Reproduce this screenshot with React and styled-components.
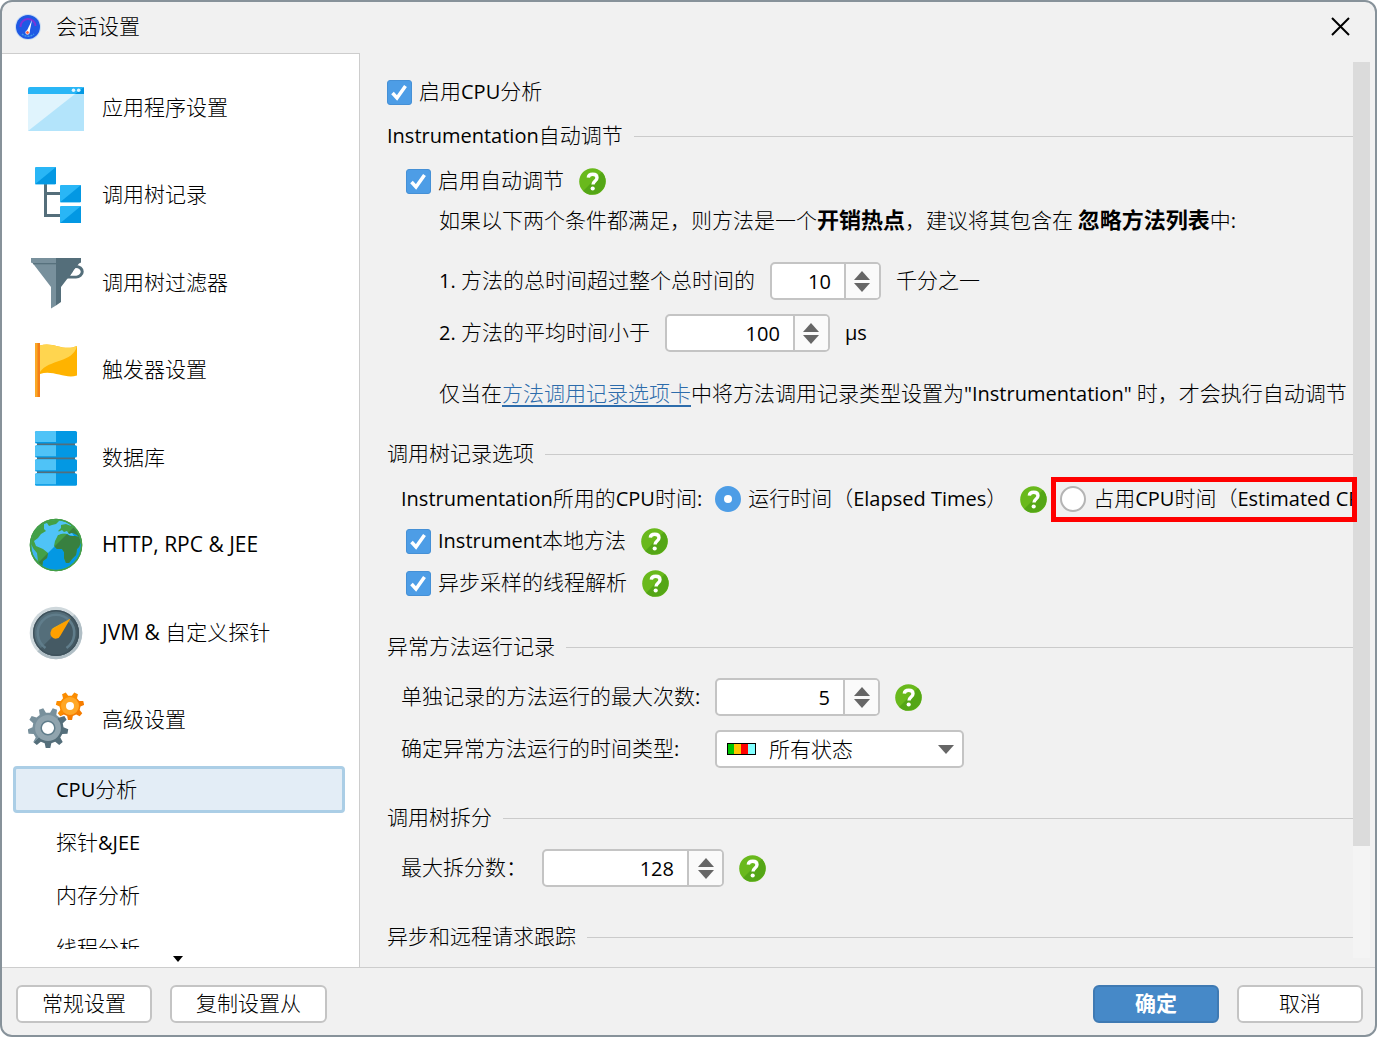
// src/App.jsx

import React, { useState } from 'react';
import styled, { createGlobalStyle } from 'styled-components';

const CJK = '"Noto Sans CJK SC", sans-serif';
const LATIN = '"Open Sans", "Noto Sans CJK SC", sans-serif';

const GlobalStyle = createGlobalStyle`
  * {
    box-sizing: border-box;
  }

  body {
    margin: 0;
    background: #fff;
    color: #000;
    font-family: ${CJK};
    font-size: 21px;
    font-weight: 300;
    line-height: 25px;
  }

  button,
  input,
  select {
    margin: 0;
    color: inherit;
    font: inherit;
  }
`;

// Text: Latin runs are set in their own face and size
const TextLine = styled.span`
  display: block;
  height: 28px;
  white-space: nowrap;
`;

const Latin = styled.span`
  font-family: ${LATIN};
  font-size: 20px;
  font-weight: 400;
  line-height: 20px;
`;

const splitRuns = (text) =>
  text
    .split(/([\x20-\x7eμ]+)/)
    .map((part, i) => (i % 2 ? <Latin key={i}>{part}</Latin> : part));

const Mixed = ({ children }) => <TextLine>{splitRuns(children)}</TextLine>;

// Window frame
const Dialog = styled.div`
  display: flex;
  flex-direction: column;
  height: 100vh;
  overflow: hidden;
  background: #f1f1f1;
  border: 2px solid #87929a;
  border-radius: 12px;
`;

const TitleBar = styled.header`
  display: flex;
  align-items: center;
  gap: 15px;
  height: 51px;
  padding: 0 24px 2px 13px;
`;

const Title = styled.h1`
  flex: 1;
  margin: 0;
  font-size: 21px;
  font-weight: 300;
`;

const CloseButton = styled.button`
  display: flex;
  padding: 0;
  background: none;
  border: none;
  cursor: pointer;
`;

const Body = styled.div`
  display: flex;
  flex: 1;
  min-height: 0;
`;

// Sidebar
const Sidebar = styled.nav`
  display: flex;
  flex-direction: column;
  flex: none;
  width: 358px;
  padding-top: 10px;
  background: #fff;
  border-top: 1px solid #cdcdcd;
  border-right: 1px solid #cdcdcd;
`;

const NavList = styled.div`
  display: flex;
  flex-direction: column;
  flex: 1;

  ${Latin} {
    font-size: 21px;
  }
`;

const NavItem = styled.button`
  display: flex;
  align-items: center;
  flex: 1;
  gap: 18px;
  padding: 0 26px;
  background: none;
  border: none;
  text-align: left;
  cursor: pointer;
`;

const SubList = styled.div`
  display: flex;
  flex-direction: column;
  gap: 6px;
  height: 185px;
  padding: 2px 14px 0 11px;
  overflow: hidden;
`;

const SubItem = styled.button`
  flex: none;
  height: 47px;
  padding: 0 40px;
  background: ${(props) => (props.$active ? '#e3edf6' : 'none')};
  border: 3px solid ${(props) => (props.$active ? '#abcee6' : 'transparent')};
  border-radius: 4px;
  text-align: left;
  cursor: pointer;
`;

const MoreButton = styled.button`
  display: flex;
  align-items: center;
  justify-content: center;
  height: 18px;
  padding: 2px 6px 0 0;
  background: none;
  border: none;
`;

// Settings panel
const Panel = styled.main`
  display: flex;
  flex: 1;
  min-width: 0;
  padding: 9px 5px 9px 27px;
`;

const Settings = styled.div`
  flex: 1;
  min-width: 0;
  padding-top: 16px;
  white-space: nowrap;
`;

const ScrollTrack = styled.div`
  display: flex;
  flex-direction: column;
  flex: none;
  width: 17px;
  background: #f4f4f4;
`;

const ScrollThumb = styled.div`
  flex: 7;
  background: #dbdbdb;
`;

const ScrollRest = styled.div`
  flex: 1;
`;

const SectionTitle = styled.h2`
  display: flex;
  align-items: center;
  gap: 11px;
  margin: ${(props) => props.$top || 36}px 0 17px;
  font-size: 21px;
  font-weight: 300;

  &::after {
    content: '';
    flex: 1;
    height: 1px;
    background: #cbcbcb;
  }
`;

const Row = styled.div`
  display: flex;
  align-items: center;
  gap: ${(props) => props.$gap || 15}px;
  margin-top: ${(props) => props.$top || 0}px;
  padding-left: ${(props) => props.$indent || 0}px;
`;

const Paragraph = styled.p`
  height: 28px;
  margin: ${(props) => props.$top}px 0 0;
  padding-left: 52px;
`;

const Strong = styled.b`
  font-size: 22px;
  font-weight: 700;
`;

const Link = styled.a`
  color: #2d6cab;
  text-decoration: underline;
  text-decoration-thickness: 2px;
  text-underline-offset: 4px;
`;

const FieldLabel = styled.label`
  width: ${(props) => (props.$width ? `${props.$width}px` : 'auto')};
`;

// Check boxes and radio buttons
const OptionLabel = styled.label`
  display: flex;
  align-items: center;
  gap: 7px;
`;

const CheckWrap = styled.span`
  position: relative;
  display: flex;
  flex: none;

  svg {
    position: absolute;
    inset: 0;
    pointer-events: none;
  }
`;

const CheckInput = styled.input`
  appearance: none;
  width: 25px;
  height: 25px;
  background: #fff;
  border: 1px solid #b4b4b4;
  border-radius: 3px;

  &:checked {
    background: #4d9de6;
    border-color: #4590d6;
  }
`;

const RadioInput = styled.input`
  appearance: none;
  flex: none;
  width: 26px;
  height: 26px;
  background: #fff;
  border: 2px solid #b4b4b4;
  border-radius: 50%;

  &:checked {
    border: 9px solid #4d9de6;
  }
`;

const HelpButton = styled.button`
  display: flex;
  flex: none;
  padding: 0;
  background: none;
  border: none;
  cursor: pointer;
`;

const Highlighted = styled.div`
  position: relative;
  display: flex;
  flex: 1;
  min-width: 0;

  ${OptionLabel} {
    min-width: 0;
    overflow-x: clip;
  }
`;

const Frame = styled.div`
  position: absolute;
  inset: -8px -4px -9px -9px;
  border: 5px solid #ff0000;
  pointer-events: none;
`;

// Number field with up and down arrows
const SpinnerBox = styled.div`
  display: flex;
  width: ${(props) => props.$width}px;
  height: 38px;
  overflow: hidden;
  background: #fff;
  border: 2px solid #c4c4c4;
  border-radius: 5px;
`;

const SpinnerInput = styled.input`
  flex: 1;
  min-width: 0;
  padding: 0 13px;
  background: none;
  border: none;
  outline: none;
  font-family: ${LATIN};
  font-size: 20px;
  font-weight: 400;
  text-align: right;
`;

const SpinnerButtons = styled.div`
  display: flex;
  flex-direction: column;
  justify-content: center;
  gap: 3px;
  width: 35px;
  background: #fafafa;
  border-left: 2px solid #c4c4c4;
`;

const StepButton = styled.button`
  display: flex;
  justify-content: center;
  padding: 0;
  background: none;
  border: none;
`;

// Drop-down
const SelectBox = styled.div`
  position: relative;
  width: 249px;
`;

const Select = styled.select`
  display: block;
  appearance: none;
  width: 100%;
  height: 38px;
  padding: 0 40px 2px 52px;
  background: #fff;
  border: 2px solid #c4c4c4;
  border-radius: 5px;
`;

const StateSwatch = styled.svg`
  position: absolute;
  top: 13px;
  left: 12px;
  pointer-events: none;
`;

const SelectArrow = styled.svg`
  position: absolute;
  top: 15px;
  right: 10px;
  pointer-events: none;
`;

// Bottom bar
const Footer = styled.footer`
  display: flex;
  align-items: center;
  gap: 18px;
  height: 68px;
  padding: 4px 12px 0 14px;
  border-top: 1px solid #cdcdcd;
`;

const Spacer = styled.div`
  flex: 1;
`;

const Button = styled.button`
  height: 38px;
  padding: 0 ${(props) => (props.$wide ? 40 : 24)}px;
  background: ${(props) => (props.$primary ? '#4689c8' : '#fff')};
  border: 2px solid ${(props) => (props.$primary ? '#3f7ab3' : '#c4c4c4')};
  border-radius: 6px;
  color: ${(props) => (props.$primary ? '#fff' : '#000')};
  font-weight: ${(props) => (props.$primary ? 700 : 300)};
  cursor: pointer;
`;

const AppLogo = () => (
  <svg width="26" height="26" viewBox="0 0 26 26">
    <circle cx="13" cy="13" r="13" fill="#c9dcf3" />
    <circle cx="13" cy="13" r="12" fill="#1f59e4" />
    <path d="M5.500 13a7.500 7.500 0 0 1 15-1" fill="none" stroke="#7a35d8" strokeWidth="2" />
    <path d="M7 20a9 9 0 0 0 12 0" fill="none" stroke="#3f9bea" strokeWidth="1.500" strokeDasharray="2 1" />
    <path d="M17 6l-6 12.500h3.500z" fill="#fff" />
    <circle cx="12.500" cy="18.500" r="1.800" fill="#ff5a36" stroke="#fff" strokeWidth="0.800" />
  </svg>
);

const WindowIcon = () => (
  <svg width="56" height="56" viewBox="0 0 56 56">
    <path d="M0 51V9q0-2 2-2h52q2 0 2 2v42z" fill="#e0f4fd" />
    <path d="M0 51L47 14h9v37z" fill="#b3e4fb" />
    <path d="M0 14V9q0-2 2-2h52q2 0 2 2v5z" fill="#29b6f6" />
    <path d="M47 14l9-7v7z" fill="#0398e3" />
    <circle cx="45.500" cy="10.300" r="1.800" fill="#e1f5fe" />
    <circle cx="50.700" cy="10.300" r="1.800" fill="#e1f5fe" />
  </svg>
);

const TreeIcon = () => (
  <svg width="56" height="56" viewBox="0 0 56 56">
    <path d="M17.500 17v31.500H33M17.500 26.500H33" fill="none" stroke="#546e7a" strokeWidth="3" />
    {[[7, 0], [32, 18], [32, 39]].map(([x, y]) => (
      <g key={y}>
        <rect x={x} y={y} width="21" height="17.300" rx="1" fill="#29b6f6" />
        <path d={`M${x + 21} ${y}v16.3q0 1-1 1H${x}z`} fill="#0398e3" />
      </g>
    ))}
  </svg>
);

const FunnelIcon = () => (
  <svg width="56" height="56" viewBox="0 0 56 56">
    <path d="M47 11.500h1a6 5 0 0 1 0 10.400H39l5-6" fill="none" stroke="#546e7a" strokeWidth="3" />
    <path d="M3 3h25v47.500l-5 3V32L5 8.500 3 7.500z" fill="#78909c" />
    <path d="M28 3h25v4.500l-2 1L33 32v15l-5 3.500z" fill="#546e7a" />
    <path d="M5 8.700h23" stroke="#546e7a" strokeWidth="1.200" />
    <path d="M42.500 20.400l4.500-6.500h1.500a3.300 3.300 0 0 1 0 6.500z" fill="#fff" />
  </svg>
);

const FlagIcon = () => (
  <svg width="56" height="56" viewBox="0 0 56 56">
    <path d="M12 3.500C25-1 35 10 49 4v29.500c-12 4-24-6-37-1.500z" fill="#ffb300" />
    <path d="M12 3.500C25-1 35 10 49 4c-4 17-28 13-37 26z" fill="#ffd54f" />
    <path d="M7 1h3v54H7z" fill="#f9a825" />
    <path d="M9.500 1H12v54H9.500z" fill="#f57f17" />
  </svg>
);

const DatabaseIcon = () => (
  <svg width="56" height="56" viewBox="0 0 56 56">
    <path d="M9 4h38v48H9z" fill="#546e7a" />
    {[1, 15.2, 29.2, 43.3].map((y) => (
      <g key={y}>
        <rect x="7" y={y} width="42" height="12.400" rx="1.500" fill="#0398e3" />
        <path d={`M7 ${y + 1.5}q0-1.5 1.5-1.5H28v11H7z`} fill="#4fc3f7" />
      </g>
    ))}
  </svg>
);

const GlobeIcon = () => (
  <svg width="56" height="56" viewBox="0 0 56 56">
    <defs>
      <clipPath id="globe">
        <circle cx="28" cy="28" r="25" />
      </clipPath>
      <clipPath id="globeShade">
        <path d="M56 0L0 56h56z" />
      </clipPath>
    </defs>
    <circle cx="28" cy="28" r="26.300" fill="#3d8f45" />
    <g clipPath="url(#globe)">
      <path d="M0 0h56v56H0z" fill="#4fc3f7" />
      <path d="M56 0L0 56h56z" fill="#0398e3" />
      {[
        { fill: '#43a047', clip: undefined },
        { fill: '#388040', clip: 'url(#globeShade)' },
      ].map(({ fill, clip }) => (
        <g key={fill} fill={fill} clipPath={clip}>
          <path d="M0 0h31v4l-3 3-4 1-3 1-2-3-3 1 0 5 2 2-5 3-3 4-4 3 2 5 7 3 5 4-1 5-4 3-1 6-8-8-4-10-2-12z" />
          <path d="M30 14l3-3 0-3 5-1 5 2 3-2 9 13v4l-6-6-4-2-4 1-4-2-4 1z" />
          <path d="M27 24l3-6 4-2 5 1 3 2 5 0 4 1 2 5-2 5-2 2-1 6-4 4-3 4-3 0-2-5 0-6-2-3-5 0-3-3z" />
        </g>
      ))}
      <path d="M30 15l4-2 2 2 3-1 2 3 3-1 2 3-5-1-3-2-5 1-3 1z" fill="#4fc3f7" />
      <path d="M3 27q0 12 7 17l-1-8q-4-4-6-9z" fill="#43b4ee" />
    </g>
    <circle cx="28" cy="28" r="25.500" fill="none" stroke="#43a047" strokeWidth="1.500" />
  </svg>
);

const GaugeIcon = () => (
  <svg width="56" height="56" viewBox="0 0 56 56">
    <circle cx="28" cy="28" r="26.300" fill="#cfd8dc" />
    <path d="M46.600 9.400a26.300 26.300 0 0 1-37.200 37.200z" fill="#b0bec5" />
    <circle cx="28" cy="28" r="23" fill="#546e7a" />
    <path d="M44.300 11.700a23 23 0 0 1-32.600 32.600z" fill="#455a64" />
    <circle cx="28" cy="28" r="22.300" fill="none" stroke="#3f525c" strokeWidth="1.500" />
    <path d="M17.500 43A18.300 18.300 0 1 1 38.500 43" fill="none" stroke="#607d8b" strokeWidth="2.600" />
    <path d="M42.500 13.500L32.500 30.500a5.300 5.300 0 1 1-7-7z" fill="#ffa000" />
    <path d="M42.500 13.500L23 25.500a5.500 5.500 0 0 1 3-3z" fill="#ffb300" />
  </svg>
);

// Outline of a toothed wheel around cx, cy
const gearPath = (cx, cy, outer, inner, teeth) => {
  const points = [];
  for (let i = 0; i < teeth; i += 1) {
    const angle = (i / teeth) * Math.PI * 2 + Math.PI / 2;
    const step = Math.PI / teeth;
    [[-0.62, inner], [-0.32, outer], [0.32, outer], [0.62, inner]].forEach(([offset, radius]) => {
      const a = angle + offset * step;
      points.push(`${(cx + radius * Math.cos(a)).toFixed(2)} ${(cy + radius * Math.sin(a)).toFixed(2)}`);
    });
  }
  return `M${points.join('L')}z`;
};

const GearsIcon = () => (
  <svg width="56" height="56" viewBox="0 0 56 56">
    <defs>
      <linearGradient id="steel" x1="0" y1="0" x2="1" y2="1">
        <stop offset="0.5" stopColor="#78909c" />
        <stop offset="0.5" stopColor="#546e7a" />
      </linearGradient>
      <linearGradient id="amber" x1="0" y1="0" x2="1" y2="1">
        <stop offset="0.5" stopColor="#fb8c00" />
        <stop offset="0.5" stopColor="#f57c00" />
      </linearGradient>
    </defs>
    <path d={gearPath(42, 14, 14.2, 10.5, 7)} fill="url(#amber)" />
    <circle cx="42" cy="14" r="6.500" fill="#fff" stroke="#ffa726" strokeWidth="5" />
    <path d={gearPath(20, 36, 20.3, 15.5, 9)} fill="url(#steel)" />
    <circle cx="20" cy="36" r="9.700" fill="#fff" stroke="#90a4ae" strokeWidth="6.500" />
    <circle cx="20" cy="36" r="6.800" fill="none" stroke="#607d8b" strokeWidth="1.500" />
  </svg>
);

const HelpIcon = () => (
  <svg width="27" height="27" viewBox="0 0 27 27">
    <circle cx="13.500" cy="13.500" r="13.300" fill="#69b91c" />
    <path d="M22.900 4.100a13.300 13.300 0 0 1-18.800 18.800z" fill="#54a616" />
    <path
      d="M9.300 9.600C9.500 7.400 11.200 6.300 13.700 6.300c2.600 0 4.300 1.300 4.300 3.500 0 3.300-4 3.200-4 6.800"
      fill="none"
      stroke="#fff"
      strokeWidth="3.400"
    />
    <circle cx="13.700" cy="20.500" r="2.100" fill="#fff" />
  </svg>
);

const Help = () => (
  <HelpButton type="button" aria-label="帮助">
    <HelpIcon />
  </HelpButton>
);

const CheckBox = ({ children }) => {
  const [checked, setChecked] = useState(true);

  return (
    <OptionLabel>
      <CheckWrap>
        <CheckInput type="checkbox" checked={checked} onChange={() => setChecked(!checked)} />
        {checked && (
          <svg width="25" height="25" viewBox="0 0 25 25">
            <path d="M5.500 13l4.500 5L18.500 6" fill="none" stroke="#fff" strokeWidth="3.500" />
          </svg>
        )}
      </CheckWrap>
      <Mixed>{children}</Mixed>
    </OptionLabel>
  );
};

const Spinner = ({ id, initial, width }) => {
  const [value, setValue] = useState(initial);

  return (
    <SpinnerBox $width={width}>
      <SpinnerInput
        id={id}
        inputMode="numeric"
        value={value}
        onChange={(e) => setValue(Number(e.target.value) || 0)}
      />
      <SpinnerButtons>
        <StepButton type="button" aria-label="增加" onClick={() => setValue(value + 1)}>
          <svg width="16" height="9" viewBox="0 0 16 9">
            <path d="M0 9l8-9 8 9z" fill="#666" />
          </svg>
        </StepButton>
        <StepButton type="button" aria-label="减少" onClick={() => setValue(value - 1)}>
          <svg width="16" height="9" viewBox="0 0 16 9">
            <path d="M0 0l8 9 8-9z" fill="#666" />
          </svg>
        </StepButton>
      </SpinnerButtons>
    </SpinnerBox>
  );
};

const categories = [
  { label: '应用程序设置', Icon: WindowIcon },
  { label: '调用树记录', Icon: TreeIcon },
  { label: '调用树过滤器', Icon: FunnelIcon },
  { label: '触发器设置', Icon: FlagIcon },
  { label: '数据库', Icon: DatabaseIcon },
  { label: 'HTTP, RPC & JEE', Icon: GlobeIcon },
  { label: 'JVM & 自定义探针', Icon: GaugeIcon },
  { label: '高级设置', Icon: GearsIcon },
];

const subPages = ['CPU分析', '探针&JEE', '内存分析', '线程分析'];

const App = () => {
  const [page, setPage] = useState('CPU分析');
  const [timeType, setTimeType] = useState('elapsed');

  return (
    <Dialog>
      <GlobalStyle />

      <TitleBar>
        <AppLogo />
        <Title>
          <Mixed>会话设置</Mixed>
        </Title>
        <CloseButton type="button" aria-label="关闭">
          <svg width="21" height="21" viewBox="0 0 21 21">
            <path d="M2 2l17 17M19 2L2 19" stroke="#000" strokeWidth="2" />
          </svg>
        </CloseButton>
      </TitleBar>

      <Body>
        <Sidebar>
          <NavList>
            {categories.map(({ label, Icon }) => (
              <NavItem key={label} type="button">
                <Icon />
                <Mixed>{label}</Mixed>
              </NavItem>
            ))}
          </NavList>
          <SubList>
            {subPages.map((name) => (
              <SubItem key={name} type="button" $active={name === page} onClick={() => setPage(name)}>
                <Mixed>{name}</Mixed>
              </SubItem>
            ))}
          </SubList>
          <MoreButton type="button" aria-label="更多">
            <svg width="10" height="6" viewBox="0 0 10 6">
              <path d="M0 0h10L5 6z" fill="#000" />
            </svg>
          </MoreButton>
        </Sidebar>

        <Panel>
          <Settings>
            <Row>
              <CheckBox>启用CPU分析</CheckBox>
            </Row>

            {/* Auto-tuning */}
            <SectionTitle $top={16}>
              <Mixed>Instrumentation自动调节</Mixed>
            </SectionTitle>
            <Row $indent={19}>
              <CheckBox>启用自动调节</CheckBox>
              <Help />
            </Row>
            <Paragraph $top={11}>
              如果以下两个条件都满足，则方法是一个<Strong>开销热点</Strong>，建议将其包含在{' '}
              <Strong>忽略方法列表</Strong>
              {splitRuns('中:')}
            </Paragraph>
            <Row $top={28} $indent={52}>
              <label htmlFor="total">
                <Mixed>1. 方法的总时间超过整个总时间的</Mixed>
              </label>
              <Spinner id="total" initial={10} width={111} />
              <Mixed>千分之一</Mixed>
            </Row>
            <Row $top={14} $indent={52}>
              <label htmlFor="average">
                <Mixed>2. 方法的平均时间小于</Mixed>
              </label>
              <Spinner id="average" initial={100} width={165} />
              <Mixed>μs</Mixed>
            </Row>
            <Paragraph $top={28}>
              仅当在<Link href="#recording">方法调用记录选项卡</Link>
              {splitRuns('中将方法调用记录类型设置为"Instrumentation" 时，才会执行自动调节')}
            </Paragraph>

            {/* Call tree recording */}
            <SectionTitle $top={32}>
              <Mixed>调用树记录选项</Mixed>
            </SectionTitle>
            <Row $indent={14} $gap={13}>
              <Mixed>Instrumentation所用的CPU时间:</Mixed>
              <OptionLabel>
                <RadioInput
                  type="radio"
                  name="timeType"
                  checked={timeType === 'elapsed'}
                  onChange={() => setTimeType('elapsed')}
                />
                <Mixed>运行时间（Elapsed Times）</Mixed>
              </OptionLabel>
              <Help />
              <Highlighted>
                <OptionLabel>
                  <RadioInput
                    type="radio"
                    name="timeType"
                    checked={timeType === 'cpu'}
                    onChange={() => setTimeType('cpu')}
                  />
                  <Mixed>占用CPU时间（Estimated CPU Times）</Mixed>
                </OptionLabel>
                <Frame />
              </Highlighted>
            </Row>
            <Row $top={14} $indent={19}>
              <CheckBox>Instrument本地方法</CheckBox>
              <Help />
            </Row>
            <Row $top={14} $indent={19}>
              <CheckBox>异步采样的线程解析</CheckBox>
              <Help />
            </Row>

            {/* Exceptional method runs */}
            <SectionTitle>
              <Mixed>异常方法运行记录</Mixed>
            </SectionTitle>
            <Row $indent={14}>
              <FieldLabel htmlFor="maxRuns" $width={299}>
                <Mixed>单独记录的方法运行的最大次数:</Mixed>
              </FieldLabel>
              <Spinner id="maxRuns" initial={5} width={165} />
              <Help />
            </Row>
            <Row $top={14} $indent={14}>
              <FieldLabel htmlFor="states" $width={299}>
                <Mixed>确定异常方法运行的时间类型:</Mixed>
              </FieldLabel>
              <SelectBox>
                <Select id="states">
                  <option>所有状态</option>
                </Select>
                <StateSwatch width="29" height="12" viewBox="0 0 29 12">
                  <path d="M0 0h29v12H0z" fill="#000" />
                  <path d="M1 1h6v10H1z" fill="#00c400" />
                  <path d="M7 1h7v10H7z" fill="#ffc400" />
                  <path d="M14 1h7v10h-7z" fill="#ff0000" />
                  <path d="M21 1h7v10h-7z" fill="#80ffff" />
                </StateSwatch>
                <SelectArrow width="16" height="9" viewBox="0 0 16 9">
                  <path d="M0 0h16L8 9z" fill="#666" />
                </SelectArrow>
              </SelectBox>
            </Row>

            {/* Call tree splitting */}
            <SectionTitle>
              <Mixed>调用树拆分</Mixed>
            </SectionTitle>
            <Row $indent={14}>
              <label htmlFor="maxSplits">
                <Mixed>最大拆分数：</Mixed>
              </label>
              <Spinner id="maxSplits" initial={128} width={182} />
              <Help />
            </Row>

            <SectionTitle>
              <Mixed>异步和远程请求跟踪</Mixed>
            </SectionTitle>
          </Settings>
          <ScrollTrack>
            <ScrollThumb />
            <ScrollRest />
          </ScrollTrack>
        </Panel>
      </Body>

      <Footer>
        <Button type="button">
          <Mixed>常规设置</Mixed>
        </Button>
        <Button type="button">
          <Mixed>复制设置从</Mixed>
        </Button>
        <Spacer />
        <Button type="button" $primary $wide>
          <Mixed>确定</Mixed>
        </Button>
        <Button type="button" $wide>
          <Mixed>取消</Mixed>
        </Button>
      </Footer>
    </Dialog>
  );
};

export default App;
